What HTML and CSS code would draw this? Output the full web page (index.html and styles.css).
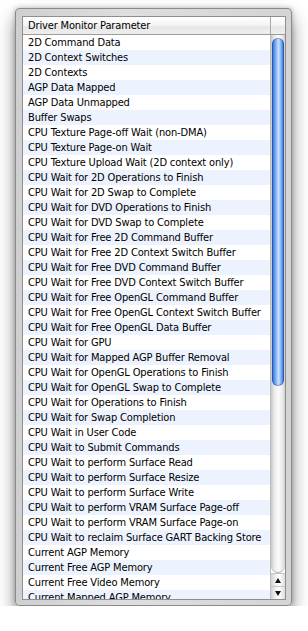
FILE: index.html
```html
<!DOCTYPE html>
<html lang="en">
<head>
    <meta charset="UTF-8">
    <title>Driver Monitor Parameters</title>
    <link rel="stylesheet" href="styles.css">
</head>
<body>
    <div class="drawer">
        <div class="table">
            <div class="table-head">
                <div class="head-cell">Driver Monitor Parameter</div>
                <div class="head-corner"></div>
            </div>
            <div class="table-body">
                <ul class="rows">
                    <li>2D Command Data</li>
                    <li>2D Context Switches</li>
                    <li>2D Contexts</li>
                    <li>AGP Data Mapped</li>
                    <li>AGP Data Unmapped</li>
                    <li>Buffer Swaps</li>
                    <li>CPU Texture Page-off Wait (non-DMA)</li>
                    <li>CPU Texture Page-on Wait</li>
                    <li>CPU Texture Upload Wait (2D context only)</li>
                    <li>CPU Wait for 2D Operations to Finish</li>
                    <li>CPU Wait for 2D Swap to Complete</li>
                    <li>CPU Wait for DVD Operations to Finish</li>
                    <li>CPU Wait for DVD Swap to Complete</li>
                    <li>CPU Wait for Free 2D Command Buffer</li>
                    <li>CPU Wait for Free 2D Context Switch Buffer</li>
                    <li>CPU Wait for Free DVD Command Buffer</li>
                    <li>CPU Wait for Free DVD Context Switch Buffer</li>
                    <li>CPU Wait for Free OpenGL Command Buffer</li>
                    <li>CPU Wait for Free OpenGL Context Switch Buffer</li>
                    <li>CPU Wait for Free OpenGL Data Buffer</li>
                    <li>CPU Wait for GPU</li>
                    <li>CPU Wait for Mapped AGP Buffer Removal</li>
                    <li>CPU Wait for OpenGL Operations to Finish</li>
                    <li>CPU Wait for OpenGL Swap to Complete</li>
                    <li>CPU Wait for Operations to Finish</li>
                    <li>CPU Wait for Swap Completion</li>
                    <li>CPU Wait in User Code</li>
                    <li>CPU Wait to Submit Commands</li>
                    <li>CPU Wait to perform Surface Read</li>
                    <li>CPU Wait to perform Surface Resize</li>
                    <li>CPU Wait to perform Surface Write</li>
                    <li>CPU Wait to perform VRAM Surface Page-off</li>
                    <li>CPU Wait to perform VRAM Surface Page-on</li>
                    <li>CPU Wait to reclaim Surface GART Backing Store</li>
                    <li>Current AGP Memory</li>
                    <li>Current Free AGP Memory</li>
                    <li>Current Free Video Memory</li>
                    <li>Current Mapped AGP Memory</li>
                </ul>
                <div class="scrollbar">
                    <div class="track">
                        <div class="thumb"></div>
                    </div>
                    <div class="arrow arrow-up"><span></span></div>
                    <div class="arrow arrow-down"><span></span></div>
                </div>
            </div>
        </div>
    </div>
</body>
</html>
```

FILE: styles.css
```css
body {
    margin: 0;
    background: #fff;
    font-family: "DejaVu Sans Condensed", "DejaVu Sans", "Liberation Sans", sans-serif;
}
.drawer {
    width: 264px;
    height: 584px;
    margin: 8px 0 0 15px;
    padding: 7px 5px 5px 6px;
    border: 1px solid #8a8a8a;
    border-radius: 4px;
    background: linear-gradient(to right, #cfcfcf, #dedede 40%, #d4d4d4);
    box-shadow: 0 10px 18px rgba(0,0,0,0.45), 0 0 5px rgba(0,0,0,0.25);
}
.table {
    height: 100%;
    box-sizing: border-box;
    border: 1px solid #8e8e8e;
    background: #fff;
    display: flex;
    flex-direction: column;
    overflow: hidden;
}
.table-head {
    display: flex;
    height: 17px;
    flex-shrink: 0;
    border-bottom: 1px solid #9c9c9c;
    background: linear-gradient(#ffffff, #f3f3f3 50%, #e6e6e6 51%, #eeeeee);
}
.head-cell {
    flex: 1;
    padding-left: 5px;
    font-size: 11px;
    letter-spacing: -0.15px;
    line-height: 17px;
    color: #000;
    white-space: nowrap;
}
.head-corner {
    width: 14px;
    border-left: 1px solid #a8a8a8;
}
.table-body {
    flex: 1;
    display: flex;
    min-height: 0;
}
.rows {
    flex: 1;
    min-width: 0;
    margin: 0;
    padding: 0;
    list-style: none;
    overflow: hidden;
}
.rows li {
    height: 15px;
    padding-left: 5px;
    font-size: 11px;
    letter-spacing: -0.15px;
    line-height: 15px;
    white-space: nowrap;
    color: #000;
}
.rows li:nth-child(even) {
    background: #edf3fe;
}
.scrollbar {
    width: 14px;
    flex-shrink: 0;
    display: flex;
    flex-direction: column;
    border-left: 1px solid #bdbdbd;
}
.track {
    flex: 1;
    padding: 3px 1px 0 1px;
    background: linear-gradient(to right, #c8c8c8, #ececec 25%, #fcfcfc 55%, #e6e6e6 85%, #cfcfcf);
    border-bottom-left-radius: 7px;
    border-bottom-right-radius: 7px;
    border-bottom: 1px solid #b5b5b5;
}
.thumb {
    height: 348px;
    border-radius: 6px;
    background: linear-gradient(to right, #2c5fc9, #5d95ea 20%, #a9cdfa 45%, #c9e2ff 55%, #6da4ee 80%, #2a5cc6);
    box-shadow: inset 0 0 0 1px rgba(20,50,130,0.35);
}
.arrow {
    height: 12px;
    display: flex;
    align-items: center;
    justify-content: center;
    background: linear-gradient(to right, #d2d2d2, #f6f6f6 40%, #ffffff 60%, #dcdcdc);
    border-top: 1px solid #c4c4c4;
}
.arrow span {
    width: 0;
    height: 0;
    border-left: 3px solid transparent;
    border-right: 3px solid transparent;
}
.arrow-up span {
    border-bottom: 5px solid #111;
}
.arrow-down span {
    border-top: 5px solid #111;
}
```
